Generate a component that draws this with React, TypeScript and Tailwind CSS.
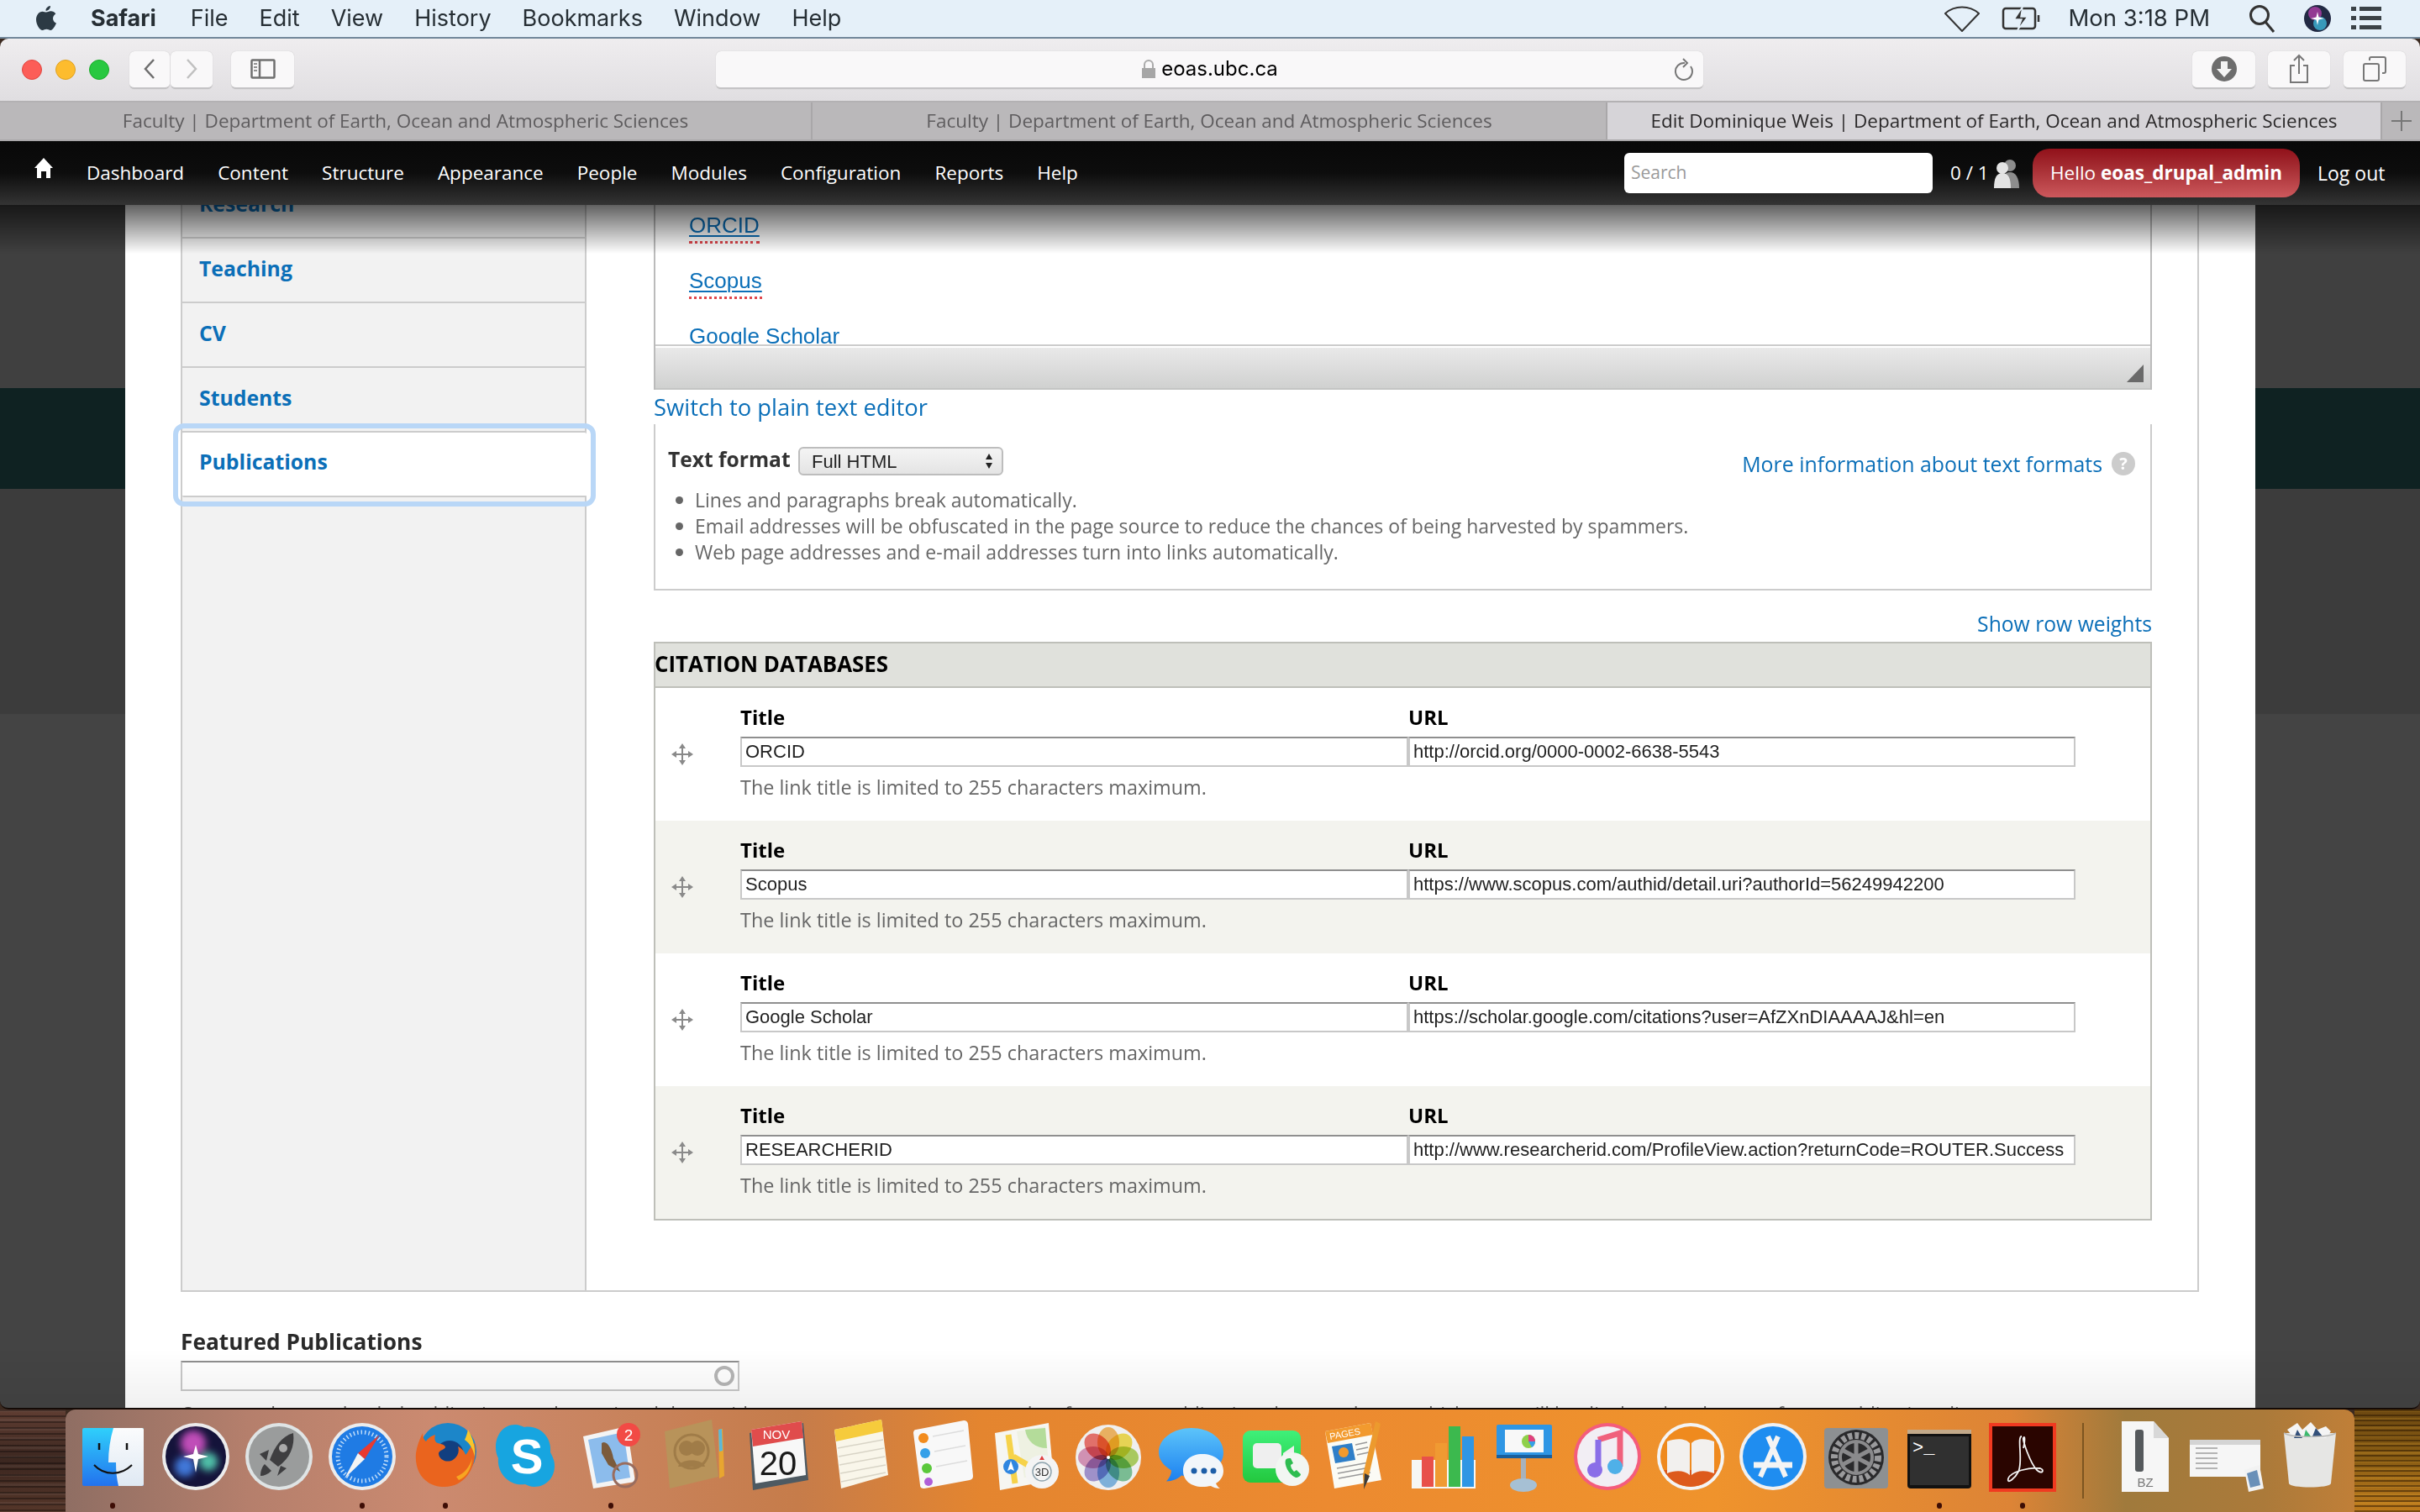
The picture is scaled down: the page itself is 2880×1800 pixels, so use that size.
import React from "react";

const menus = ["File", "Edit", "View", "History", "Bookmarks", "Window", "Help"];
const adminItems = ["Dashboard", "Content", "Structure", "Appearance", "People", "Modules", "Configuration", "Reports", "Help"];
const rows = [
  ["ORCID", "http://orcid.org/0000-0002-6638-5543"],
  ["Scopus", "https://www.scopus.com/authid/detail.uri?authorId=56249942200"],
  ["Google Scholar", "https://scholar.google.com/citations?user=AfZXnDIAAAAJ&hl=en"],
  ["RESEARCHERID", "http://www.researcherid.com/ProfileView.action?returnCode=ROUTER.Success"],
];

function Apple() {
  return (
    <svg width="26" height="32" viewBox="0 0 26 32" fill="#2c3a44">
      <path d="M18 1c.3 3-2.600 6-5.500 5.800C12.200 4 15 1.200 18 1zM13 8.500c1.500 0 3-1.300 5.500-1.300 2.200 0 4.500 1.100 5.800 3.200-4.800 2.900-4 9.300.7 11.200-1.200 3.100-4 8.400-6.800 8.400-1.800 0-2.700-1.200-4.800-1.200s-3.100 1.200-4.800 1.200C5 30 1 23 1 17.500c0-5.600 3.600-9.800 7.500-9.800 1.800 0 3.400.8 4.500.8z" />
    </svg>
  );
}

function MenuBar() {
  return (
    <div className="h-[46px] shrink-0 flex items-center bg-[#e5f0f9] border-b-2 border-[#71879a] text-[#262e34] text-[27px] font-['Inter',sans-serif] pl-[42px] pr-[46px]">
      <Apple />
      <span className="ml-[40px] font-bold mr-[41px]">Safari</span>
      <div className="flex gap-[37px]">
        {menus.map((m) => <span key={m}>{m}</span>)}
      </div>
      <div className="ml-auto flex items-center">
        <svg width="42" height="32" viewBox="0 0 42 32" fill="none" stroke="#333" strokeWidth="2"><path d="M1 10C12 0 30 0 41 10L21 31Z" /></svg>
        <svg className="ml-[26px]" width="46" height="30" viewBox="0 0 46 30" fill="none" stroke="#333" strokeWidth="2.500"><rect x="2" y="3" width="38" height="24" rx="3" /><path d="M44 11v8" /><path d="M25 1 15 16h9l-5 13 12-16h-8z" fill="#333" stroke="#e5f0f9" strokeWidth="1.500" /></svg>
        <span className="ml-[33px] text-[27.500px]">Mon 3:18 PM</span>
        <svg className="ml-[46px]" width="32" height="34" viewBox="0 0 32 34" fill="none" stroke="#333" strokeWidth="3"><circle cx="13" cy="13" r="10.500" /><path d="m20 21 10 12" /></svg>
        <svg className="ml-[34px]" width="32" height="32" viewBox="0 0 32 32"><circle cx="16" cy="16" r="16" fill="#222a44" /><circle cx="13" cy="10" r="8" fill="#b03fa8" opacity=".8" /><circle cx="19" cy="22" r="8" fill="#3fb5d8" opacity=".8" /><path d="M16 8l1.500 6.500 6.500 1.500-6.500 1.500-1.500 6.500-1.500-6.500-6.500-1.500 6.500-1.500z" fill="#fff" /></svg>
        <svg className="ml-[24px]" width="36" height="28" viewBox="0 0 36 28" fill="#3b4247"><rect x="0" y="0" width="6" height="5" /><rect x="10" y="0" width="26" height="5" /><rect x="0" y="11" width="6" height="5" /><rect x="10" y="11" width="26" height="5" /><rect x="0" y="22" width="6" height="5" /><rect x="10" y="22" width="26" height="5" /></svg>
      </div>
    </div>
  );
}

function ToolBtn({ className, children }: { className: string; children?: React.ReactNode }) {
  return (
    <div className={"h-[45px] rounded-[6px] bg-[#f9f8f9] border-b-2 border-[#c4c3c5] shadow-[0_0_1px_#bbb] flex items-center justify-center " + className}>
      {children}
    </div>
  );
}

function SafariBar() {
  return (
    <div className="h-[76px] shrink-0 flex items-center bg-[linear-gradient(180deg,#efedef,#e0dee1)] border-b-2 border-[#b3b1b3] rounded-t-[10px] font-['Inter',sans-serif]">
      <div className="ml-[26px] flex gap-[16px]">
        <span className="w-[24px] h-[24px] rounded-full bg-[#fc5d57] border border-[#e0443e]" />
        <span className="w-[24px] h-[24px] rounded-full bg-[#fdbc2e] border border-[#dea123]" />
        <span className="w-[24px] h-[24px] rounded-full bg-[#28c840] border border-[#1aab29]" />
      </div>
      <div className="ml-[24px] flex gap-[1px]">
        <ToolBtn className="w-[48px]">
          <svg width="16" height="26" viewBox="0 0 16 26" fill="none" stroke="#6e6e6e" strokeWidth="2.500"><path d="M13 2 3 13l10 11" /></svg>
        </ToolBtn>
        <ToolBtn className="w-[50px]">
          <svg width="16" height="26" viewBox="0 0 16 26" fill="none" stroke="#c0c0c0" strokeWidth="2.500"><path d="m3 2 10 11L3 24" /></svg>
        </ToolBtn>
      </div>
      <ToolBtn className="ml-[22px] w-[75px]">
        <svg width="30" height="24" viewBox="0 0 30 24" fill="none" stroke="#707070" strokeWidth="2.500"><rect x="1.500" y="1.500" width="27" height="21" rx="1" /><path d="M11 1v22" /><path d="M4 6h4M4 10h4M4 14h4" strokeWidth="1.500" /></svg>
      </ToolBtn>
      <ToolBtn className="ml-[502px] w-[1175px] relative">
        <span className="flex items-center gap-[6px] text-[24px] text-black">
          <svg width="18" height="22" viewBox="0 0 18 22"><path d="M4 10V6a5 5 0 0 1 10 0v4" fill="none" stroke="#aaa" strokeWidth="2" /><rect x="1" y="10" width="16" height="12" fill="#a6a6a6" /></svg>
          eoas.ubc.ca
        </span>
        <svg className="absolute right-[10px] top-[8px]" width="26" height="28" viewBox="0 0 26 28" fill="none" stroke="#777" strokeWidth="2"><path d="M21 10a10 10 0 1 1-7-4" /><path d="m12 1 5 5-5 5" /></svg>
      </ToolBtn>
      <ToolBtn className="ml-[582px] w-[75px]">
        <svg width="30" height="30" viewBox="0 0 30 30"><circle cx="15" cy="15" r="15" fill="#6d6d6d" /><path d="M11 6h8v9h5l-9 10-9-10h5z" fill="#f4f4f4" /></svg>
      </ToolBtn>
      <ToolBtn className="ml-[15px] w-[74px]">
        <svg width="26" height="36" viewBox="0 0 26 36" fill="none" stroke="#777" strokeWidth="2"><path d="M8 14H3v20h20V14h-5" /><path d="M13 24V2M7 8l6-6 6 6" /></svg>
      </ToolBtn>
      <ToolBtn className="ml-[16px] w-[74px]">
        <svg width="30" height="30" viewBox="0 0 30 30" fill="none" stroke="#777" strokeWidth="2"><rect x="2" y="9" width="18" height="20" rx="2" /><path d="M9 5V3a2 2 0 0 1 2-2h15a2 2 0 0 1 2 2v15a2 2 0 0 1-2 2h-2" /></svg>
      </ToolBtn>
    </div>
  );
}

const tabTitle = "Faculty | Department of Earth, Ocean and Atmospheric Sciences";

function Tabs() {
  return (
    <div className="h-[46px] shrink-0 flex bg-[#bab8ba] border-b-2 border-[#aaa8aa] text-[22.500px] font-['Open_Sans',sans-serif] text-[#5e5c5e]">
      <div className="w-[967px] flex items-center justify-center border-r-2 border-[#a9a7a9]">{tabTitle}</div>
      <div className="w-[944px] flex items-center justify-center">{tabTitle}</div>
      <div className="w-[922px] flex items-center justify-center bg-[#d6d4d8] text-[#2a2829] border-l-2 border-[#a9a7a9]">Edit Dominique Weis | Department of Earth, Ocean and Atmospheric Sciences</div>
      <div className="flex-1 flex items-center justify-center border-l-2 border-[#a9a7a9]">
        <svg width="26" height="26" viewBox="0 0 26 26" stroke="#777" strokeWidth="2"><path d="M13 1v24M1 13h24" /></svg>
      </div>
    </div>
  );
}

function AdminBar() {
  return (
    <div className="h-[76px] shrink-0 flex items-center bg-[linear-gradient(180deg,#080808_0,#0d0d0d_50%,#343434_100%)] text-white text-[22.500px] font-['Open_Sans',sans-serif] relative z-20">
      <svg className="ml-[40px] mb-[12px]" width="24" height="26" viewBox="0 0 24 26" fill="#fff"><path d="M12 1 23 13h-3v12h-5v-8H9v8H4V13H1z" /></svg>
      <div className="ml-[39px] flex gap-[40px]">
        {adminItems.map((a) => <span key={a} className="whitespace-nowrap">{a}</span>)}
      </div>
      <div className="ml-auto flex items-center pr-[38px]">
        <div className="w-[367px] h-[48px] rounded-[6px] bg-white text-[#9a9a9a] text-[21px] flex items-center pl-[8px]">Search</div>
        <div className="w-[119px] flex items-center pl-[21px]">
          <span>0 / 1</span>
          <svg className="ml-[5px]" width="32" height="36" viewBox="0 0 32 36"><circle cx="20" cy="9" r="7" fill="#8d8d8d" /><path d="M10 36c0-12 3-19 10-19s11 7 11 19z" fill="#8d8d8d" /><circle cx="11" cy="12" r="7" fill="#e4e4e4" /><path d="M1 36c0-12 3-18 10-18s10 6 10 18z" fill="#e4e4e4" /></svg>
        </div>
        <div className="h-[58px] w-[318px] rounded-[20px] bg-[linear-gradient(180deg,#91111a,#a32a30_35%,#cc585c)] flex items-center justify-center whitespace-nowrap">
          Hello&nbsp;<b>eoas_drupal_admin</b>
        </div>
        <span className="ml-[21px] w-[84px] text-[23px] whitespace-nowrap">Log out</span>
      </div>
    </div>
  );
}

function VerticalTabs() {
  return (
    <div className="w-[481px] shrink-0 bg-[#f2f2f2] border-r-2 border-[#ccc] text-[24.800px] font-bold text-[#0b6fb8]">
      {["Research", "Teaching", "CV", "Students"].map((t) => (
        <div key={t} className="h-[77px] border-b-2 border-[#ccc] pl-[20px] pt-[20px] leading-[30px]">{t}</div>
      ))}
      <div className="h-[77px] border-b-2 border-[#ccc] pl-[20px] pt-[19px] leading-[30px] bg-white -mr-[2px] relative outline-[6px] outline-[#b9d7f7] outline-offset-[5px] rounded-[2px]">Publications</div>
    </div>
  );
}

function Misspelt({ children, plain }: { children: React.ReactNode; plain?: boolean }) {
  return (
    <div className="h-[66px] flex items-center">
      <span className="relative text-[26px] text-[#0b6fb8] font-['Liberation_Sans',sans-serif] underline decoration-2 underline-offset-[3px]">
        {children}
        {!plain && <span className="absolute inset-x-0 bottom-[-2px] h-[3px] border-b-[3px] border-dotted border-[#e0474c]" />}
      </span>
    </div>
  );
}

function Editor() {
  return (
    <div className="border-x-2 border-[#bbb]">
      <div className="h-[203px] overflow-hidden pt-[28px] pl-[40px] bg-white">
        <Misspelt>ORCID</Misspelt>
        <Misspelt>Scopus</Misspelt>
        <Misspelt plain>Google Scholar</Misspelt>
      </div>
      <div className="h-[54px] border-t-2 border-[#ccc] border-b-2 border-b-[#c4c5c4] bg-[linear-gradient(180deg,#fff_0,#fff_2px,#e9e9e9_2px,#d0d1d0_100%)] flex items-end justify-end pr-[8px] pb-[7px]">
        <div className="w-[20px] h-[21px] bg-[#6a6a6a] [clip-path:polygon(100%_0,100%_100%,0_100%)]" />
      </div>
    </div>
  );
}

function FormatBox() {
  return (
    <div className="border-x-2 border-b-2 border-[#ccc] pl-[15px] pr-[18px] pt-[27px] pb-[28px]">
      <div className="flex items-start h-[34px]">
        <b className="w-[155px] text-[#333] text-[24.600px] leading-[30px] whitespace-nowrap">Text format</b>
        <div className="w-[244px] h-[34px] rounded-[6px] border-2 border-[#bdbdbd] bg-[linear-gradient(180deg,#f4f4f4,#e4e4e4)] flex items-center justify-between pl-[14px] pr-[10px] text-[22px] text-[#222] font-['Liberation_Sans',sans-serif]">
          Full HTML
          <svg width="10" height="20" viewBox="0 0 10 20" fill="#222"><path d="M5 1l4 7H1zM5 19l4-7H1z" /></svg>
        </div>
        <div className="ml-auto flex items-center gap-[11px] mt-[5px]">
          <span className="text-[#0b6fb8] text-[24.900px] leading-[30px]">More information about text formats</span>
          <span className="w-[28px] h-[28px] rounded-full bg-[#ccc] text-white text-[20px] font-bold flex items-center justify-center">?</span>
        </div>
      </div>
      <ul className="mt-[14px] text-[#666] text-[23px] leading-[31px] pl-[18px]">
        {[
          "Lines and paragraphs break automatically.",
          "Email addresses will be obfuscated in the page source to reduce the chances of being harvested by spammers.",
          "Web page addresses and e-mail addresses turn into links automatically.",
        ].map((t) => (
          <li key={t} className="flex items-center">
            <span className="w-[9px] h-[9px] rounded-full bg-[#666] mr-[14px] -ml-[9px]" />
            {t}
          </li>
        ))}
      </ul>
    </div>
  );
}

function Drag() {
  return (
    <svg width="26" height="26" viewBox="0 0 26 26" fill="#8a8a8a">
      <path d="M13 0l4 6h-3v6h6V9l6 4-6 4v-3h-6v6h3l-4 6-4-6h3v-6H6v3l-6-4 6-4v3h6V6H9z" />
    </svg>
  );
}

function Field({ value, w }: { value: string; w: string }) {
  return (
    <input
      readOnly
      value={value}
      className={"h-[36px] bg-white border-2 border-[#c8c8c8] border-t-[#8f8f8f] px-[4px] text-[22px] text-[#222] font-['Liberation_Sans',sans-serif] outline-none " + w}
    />
  );
}

function CitationTable() {
  return (
    <div className="border-2 border-[#bebfb9]">
      <div className="h-[53px] bg-[#e0e1dc] border-b-2 border-[#bebfb9] flex items-center pb-[3px] font-bold text-[25.900px] text-black"><span className="-ml-px">CITATION DATABASES</span></div>
      {rows.map(([title, url], i) => (
        <div key={title} className={"h-[158px] flex items-center pb-[6px] " + (i % 2 ? "bg-[#f3f3ee]" : "bg-white")}>
          <div className="w-[101px] shrink-0 pl-[19px] mt-[6px] flex"><Drag /></div>
          <div>
            <div className="flex font-bold text-[24px] leading-[28px] text-black">
              <span className="w-[795px]">Title</span>
              <span>URL</span>
            </div>
            <div className="flex mt-[9px]">
              <Field value={title} w="w-[795px]" />
              <Field value={url} w="w-[794px]" />
            </div>
            <div className="mt-[11px] text-[23.400px] leading-[26px] text-[#666]">The link title is limited to 255 characters maximum.</div>
          </div>
        </div>
      ))}
    </div>
  );
}

function Page() {
  return (
    <div className="flex-1 relative overflow-hidden rounded-b-[10px] border-b-2 border-[#140a06] bg-[linear-gradient(180deg,#404040_0,#404040_218px,#0f2222_218px,#0f2222_338px,#3c3c3c_338px,#3c3c3c_606px,#444_606px)]">
      <div className="ml-[149px] w-[2535px] h-full bg-white pl-[66px] overflow-hidden font-['Open_Sans',sans-serif]">
        <div className="-mt-[39px] w-[2402px] h-[1333px] border-2 border-[#ccc] flex">
          <VerticalTabs />
          <div className="pl-[80px] w-[1863px]">
            <Editor />
            <div className="h-[41px] flex items-center text-[27.400px] text-[#0b6fb8]">Switch to plain text editor</div>
            <FormatBox />
            <div className="h-[61px] flex items-end justify-end pb-[8px] text-[24.700px] leading-[26px] text-[#0b6fb8]">Show row weights</div>
            <CitationTable />
          </div>
        </div>
        <div className="mt-[44px] font-bold text-[26.300px] leading-[30px] text-[#2a2a2a]">Featured Publications</div>
        <div className="mt-[8px] w-[665px] h-[36px] border-2 border-[#c8c8c8] border-t-[#8f8f8f] flex items-center justify-end pr-[4px]">
          <span className="w-[24px] h-[24px] rounded-full border-[4px] border-[#b5b5b5]" />
        </div>
        <div className="mt-[10px] whitespace-nowrap text-[23px] text-[#666]">Once you have uploaded publications and associated them with your user account, you can select from your publications here to choose which ones will be displayed at the top of your publications list.</div>
      </div>
      <div className="absolute inset-x-0 top-0 h-[58px] bg-[linear-gradient(180deg,rgba(0,0,0,.62),rgba(0,0,0,0))] pointer-events-none" />
      <div className="absolute inset-x-0 bottom-0 h-[70px] bg-[linear-gradient(180deg,rgba(0,0,0,0),rgba(0,0,0,.06))] pointer-events-none" />
    </div>
  );
}

/* ---- dock icons, each on a 90x90 canvas ---- */
const I = ({ children }: { children: React.ReactNode }) => (
  <svg width="90" height="90" viewBox="0 0 90 90">{children}</svg>
);

const petals = ["#f7b04c", "#f5dd3c", "#a6d04a", "#6cc08c", "#6fb0e4", "#9a8ad0", "#d88ab4", "#ee5f58"];

const icons: Record<string, React.ReactNode> = {
  finder: (
    <I>
      <defs>
        <linearGradient id="fb" x1="0" y1="0" x2="0" y2="1"><stop offset="0" stopColor="#2fd0fb" /><stop offset="1" stopColor="#2372ee" /></linearGradient>
        <linearGradient id="fw" x1="0" y1="0" x2="0" y2="1"><stop offset="0" stopColor="#fbfcfd" /><stop offset="1" stopColor="#dfe9f3" /></linearGradient>
      </defs>
      <rect x="9" y="12" width="73" height="69" rx="2" fill="url(#fb)" />
      <path d="M46 12h34a2 2 0 0 1 2 2v65a2 2 0 0 1-2 2H52c-2-8-3-17-3-28H40c0-14 2-28 6-41z" fill="url(#fw)" />
      <path d="M29 30v8M62 30v8" stroke="#111" strokeWidth="2.500" />
      <path d="M23 56c12 13 32 13 45 0" stroke="#111" strokeWidth="2" fill="none" />
    </I>
  ),
  siri: (
    <I>
      <defs><filter id="sb"><feGaussianBlur stdDeviation="4" /></filter></defs>
      <circle cx="45" cy="46" r="40" fill="#ececec" />
      <circle cx="45" cy="46" r="36" fill="#14133a" />
      <g filter="url(#sb)">
        <circle cx="42" cy="30" r="15" fill="#c04db8" />
        <circle cx="60" cy="52" r="11" fill="#4fc0a8" />
        <circle cx="32" cy="58" r="12" fill="#3f77d8" />
      </g>
      <path d="M45 32l3 11 12 3-12 3-3 16-3-16-12-3 12-3z" fill="#fff" />
    </I>
  ),
  launchpad: (
    <I>
      <circle cx="45" cy="46" r="40" fill="#dfe4e5" />
      <circle cx="45" cy="46" r="36" fill="#9a9c9c" />
      <path d="M62 18c2 16-4 30-18 40l-10-8c6-16 14-28 28-32z" fill="#3e3e40" />
      <circle cx="50" cy="36" r="5" fill="#a9a9a9" />
      <path d="M33 38l-11 5 8 8zM47 57l-4 12 11-9zM28 55c-4 4-5 10-5 14 4 0 9-2 13-6z" fill="#3e3e40" />
    </I>
  ),
  safari: (
    <I>
      <circle cx="45" cy="46" r="40" fill="#ececec" />
      <circle cx="45" cy="46" r="36" fill="#1f7be4" />
      <circle cx="45" cy="46" r="29" fill="none" stroke="#bfdcf8" strokeWidth="5" strokeDasharray="1.500 3" />
      <path d="M66 20 48 49 40 42z" fill="#e83a30" />
      <path d="M24 72 40 42 48 49z" fill="#f4f4f4" />
    </I>
  ),
  firefox: (
    <I>
      <circle cx="48" cy="40" r="34" fill="#1c86c9" />
      <circle cx="50" cy="44" r="17" fill="#123f80" />
      <path d="M80 30c4 26-10 52-36 52C22 82 8 66 10 42c1-8 4-16 8-24 0 6 2 8 4 10 2-4 7-7 11-8-1 4-1 6 1 9 3 2 11 2 11 6-1 3-7 3-8 7 0 8 10 12 17 8 6-4 8-10 6-16 4 2 8 6 9 10 4-4 5-10 11-14z" fill="#ea641e" />
      <path d="M72 14c5 8 9 20 8 32-2-9-6-16-12-20 2-4 3-8 4-12z" fill="#f9c62b" />
      <path d="M58 70c10-4 16-12 19-22-1 12-6 22-16 26z" fill="#f7a521" />
    </I>
  ),
  skype: (
    <I>
      <path d="M30 8c5 0 8 2 11 3 18-3 33 12 31 30 2 4 5 9 5 16 0 14-10 25-24 25-5 0-8-2-11-3C24 82 8 66 10 48c-2-4-3-8-3-13C7 19 17 8 30 8z" fill="#17a5e0" />
      <text x="44" y="66" textAnchor="middle" fontSize="58" fontWeight="700" fill="#fff" fontFamily="'Liberation Sans',sans-serif">S</text>
    </I>
  ),
  mail: (
    <I>
      <path d="M12 22 64 10l10 66-50 8z" fill="#f4f4f4" />
      <path d="M18 26 60 17l8 54-40 7z" fill="#8cbcec" />
      <path d="M34 30c6-4 12 6 14 18l8 16-14-8-8-14z" fill="#7b5b3c" />
      <circle cx="62" cy="68" r="14" fill="none" stroke="#9a6d5e" strokeWidth="3" />
      <circle cx="66" cy="20" r="14" fill="#f24a45" />
      <text x="66" y="27" textAnchor="middle" fontSize="19" fill="#fff" fontFamily="'Liberation Sans',sans-serif">2</text>
    </I>
  ),
  contacts: (
    <I>
      <path d="M74 14l5-1 2 56-6 3z" fill="#e8a630" />
      <path d="M74 14l4-1 1 26-4 1z" fill="#5cb8d8" />
      <path d="M10 16 66 2l8 68-58 14z" fill="#b8935a" />
      <circle cx="42" cy="40" r="20" fill="none" stroke="#a07c48" strokeWidth="3" />
      <circle cx="36" cy="36" r="9" fill="#a07c48" />
      <circle cx="49" cy="36" r="9" fill="#a07c48" />
      <path d="M26 58c2-10 30-10 32 0z" fill="#a07c48" />
    </I>
  ),
  calendar: (
    <I>
      <path d="M12 18 76 6l6 68-66 12z" fill="#4e5a62" />
      <path d="M14 14 74 4l5 64-60 10z" fill="#f8f8f8" />
      <path d="M14 14 74 4l2 20-60 10z" fill="#e04c4c" />
      <text x="44" y="25" textAnchor="middle" fontSize="15" fill="#fff" fontFamily="'Liberation Sans',sans-serif">NOV</text>
      <text x="46" y="68" textAnchor="middle" fontSize="40" fill="#1a1a1a" fontFamily="'Liberation Sans',sans-serif">20</text>
    </I>
  ),
  notes: (
    <I>
      <path d="M14 14 70 2l8 66-56 16z" fill="#f9f6ea" />
      <path d="M14 14 70 2l2 14-56 12z" fill="#f6cb3c" />
      <path d="M18 36 72 26M19 46l54-10M20 56l54-10M21 66l54-10M22 76l53-11" stroke="#d8d4c6" strokeWidth="1.500" />
    </I>
  ),
  reminders: (
    <I>
      <path d="M13 14 70 3c3 0 4 1 5 4l6 62c0 3-1 4-4 5l-54 10c-3 0-5-1-5-4L10 18c0-2 1-4 3-4z" fill="#f8f8f8" />
      <circle cx="22" cy="24" r="6" fill="#f28c1e" />
      <circle cx="24" cy="42" r="6" fill="#35a0e8" />
      <circle cx="26" cy="60" r="6" fill="#5bc83c" />
      <circle cx="28" cy="76" r="5" fill="#b05fd8" />
      <path d="M33 22 70 15M35 40l37-7M37 58l37-7" stroke="#ddd" strokeWidth="1.500" />
    </I>
  ),
  maps: (
    <I>
      <path d="M8 18 72 6l6 68-64 12z" fill="#f6f6f2" />
      <path d="M34 16 68 10l5 56-30 5z" fill="#eef1e2" />
      <path d="M44 14c2 14 12 22 26 22l-2-24z" fill="#b4dc9a" />
      <path d="M24 20l8 58" stroke="#f6d24a" strokeWidth="7" />
      <path d="M30 46l24 14" stroke="#f6d24a" strokeWidth="7" />
      <circle cx="27" cy="58" r="9" fill="#2f86e0" />
      <path d="m27 51 4 12-4-2-4 2z" fill="#fff" />
      <circle cx="64" cy="64" r="20" fill="#f4f4f4" />
      <circle cx="64" cy="64" r="11" fill="none" stroke="#8fa4ae" strokeWidth="1.500" />
      <text x="64" y="69" textAnchor="middle" fontSize="13" fill="#333" fontFamily="'Liberation Sans',sans-serif">3D</text>
      <path d="m64 45 3 5h-6z" fill="#e04040" />
    </I>
  ),
  photos: (
    <I>
      <circle cx="44" cy="47" r="39" fill="#efefef" />
      <g>
        {petals.map((c, i) => (
          <ellipse key={c} cx="44" cy="29" rx="13" ry="18" fill={c} opacity=".85" className="mix-blend-multiply" transform={`rotate(${i * 45} 44 47)`} />
        ))}
      </g>
      <circle cx="44" cy="47" r="2" fill="#fff" />
    </I>
  ),
  messages: (
    <I>
      <defs><linearGradient id="mg" x1="0" y1="0" x2="0" y2="1"><stop offset="0" stopColor="#5cc4fa" /><stop offset="1" stopColor="#1c80f0" /></linearGradient></defs>
      <path d="M44 12c21 0 38 12 38 29 0 17-17 29-38 29-4 0-8-.5-12-1.500-4 4-11 7-18 7 4-4 6-9 6-13C11 57 5 50 5 41 5 24 23 12 44 12z" fill="url(#mg)" />
      <path d="M57 43c14 0 25 8 25 20 0 7-4 12-9 15 1 2 3 5 5 6-4 0-8-1-11-3-3 .5-6 1-10 1-14 0-23-8-23-19 0-12 9-20 23-20z" fill="#f2f6fa" />
      <circle cx="47" cy="63" r="3.500" fill="#1d5ea8" /><circle cx="59" cy="63" r="3.500" fill="#1d5ea8" /><circle cx="70" cy="63" r="3.500" fill="#1d5ea8" />
    </I>
  ),
  facetime: (
    <I>
      <defs><linearGradient id="ft" x1="0" y1="0" x2="0" y2="1"><stop offset="0" stopColor="#3ff07a" /><stop offset="1" stopColor="#23c83e" /></linearGradient></defs>
      <rect x="6" y="15" width="69" height="62" rx="9" fill="url(#ft)" />
      <rect x="18" y="30" width="34" height="30" rx="5" fill="#efefef" />
      <path d="m54 42 13-9v24l-13-9z" fill="#efefef" />
      <circle cx="65" cy="61" r="20" fill="#f2f6f2" />
      <path d="M57 50c-2 5 3 17 12 21 3 0 6-2 6-4l-5-5-3 2c-2-2-4-5-4-8l3-2-3-6c-2 0-5 0-6 2z" fill="#2ebd50" />
    </I>
  ),
  pages: (
    <I>
      <path d="M6 16 60 6l13 68-56 10z" fill="#fbfbf5" />
      <path d="M6 16 60 6l3 14-54 10z" fill="#f29a2e" />
      <text x="12" y="26" fontSize="11" fill="#fff" fontFamily="'Liberation Sans',sans-serif" transform="rotate(-10 12 26)">PAGES</text>
      <path d="M14 34 38 30l4 20-24 4z" fill="#2f7fc8" />
      <circle cx="28" cy="41" r="6" fill="#f29a2e" />
      <path d="M42 32 56 29M43 38l14-3M44 44l14-3M20 60l38-7M21 66l38-7M22 72l38-7" stroke="#999" strokeWidth="1.500" />
      <path d="M66 4l6 3-14 62-6 16-1-17z" fill="#ec9a2e" />
      <path d="M53 66l6 3-7 16z" fill="#3a3a3a" />
    </I>
  ),
  numbers: (
    <I>
      <path d="M10 50h76v34H10z" fill="#f6f6f4" />
      <rect x="22" y="46" width="14" height="36" fill="#e8504a" />
      <rect x="38" y="30" width="14" height="52" fill="#f09a32" />
      <rect x="54" y="10" width="14" height="72" fill="#3cb94e" />
      <rect x="70" y="22" width="14" height="60" fill="#2f96e4" />
    </I>
  ),
  keynote: (
    <I>
      <rect x="41" y="40" width="6" height="40" fill="#a8b2ba" />
      <ellipse cx="44" cy="80" rx="16" ry="8" fill="#a6c0d4" />
      <rect x="12" y="8" width="66" height="40" rx="2" fill="#2f96e4" />
      <rect x="12" y="44" width="66" height="4" fill="#1a5f9c" />
      <rect x="22" y="14" width="46" height="27" fill="#f8f8f8" />
      <circle cx="50" cy="28" r="8" fill="#8fd04a" />
      <path d="M50 28V20a8 8 0 0 1 8 8z" fill="#e04080" />
      <path d="M50 28h8a8 8 0 0 1-4 7z" fill="#35a0e8" />
    </I>
  ),
  music: (
    <I>
      <circle cx="45" cy="46" r="40" fill="#f45c7c" />
      <circle cx="45" cy="46" r="36" fill="#f2eef4" />
      <path d="M34 26 60 18v40" stroke="#f0607c" strokeWidth="7" fill="none" />
      <circle cx="30" cy="62" r="9" fill="#8a6ee8" />
      <circle cx="54" cy="58" r="9" fill="#4fb0e8" />
      <path d="M34 26v36" stroke="#8a6ee8" strokeWidth="7" />
    </I>
  ),
  books: (
    <I>
      <circle cx="45" cy="46" r="40" fill="#f4f4f4" />
      <circle cx="45" cy="46" r="36" fill="#ef8a1e" />
      <path d="M45 82a36 36 0 0 1-32-20h64a36 36 0 0 1-32 20z" fill="#dd5a1c" />
      <path d="M17 28c10-4 22-4 27 2v38c-6-6-18-6-27-2zM73 28c-10-4-22-4-27 2v38c6-6 18-6 27-2z" fill="#f2f0ee" />
    </I>
  ),
  appstore: (
    <I>
      <circle cx="45" cy="46" r="40" fill="#f0f0f0" />
      <circle cx="45" cy="46" r="36" fill="#1f8df0" />
      <path d="M51 22 30 70M39 22l21 48" stroke="#f4f4f4" strokeWidth="6" />
      <path d="M22 56h46" stroke="#f4f4f4" strokeWidth="7" />
    </I>
  ),
  prefs: (
    <I>
      <rect x="7" y="12" width="76" height="72" rx="4" fill="#8d9092" />
      <circle cx="45" cy="47" r="33" fill="#2a2a2c" />
      <circle cx="45" cy="47" r="26" fill="none" stroke="#9a9a9c" strokeWidth="8" strokeDasharray="5 3" />
      <circle cx="45" cy="47" r="19" fill="none" stroke="#8a8a8c" strokeWidth="4" />
      <path d="M45 28v38M28 38l34 18M28 56l34-18" stroke="#8a8a8c" strokeWidth="5" />
    </I>
  ),
  terminal: (
    <I>
      <rect x="7" y="14" width="76" height="70" rx="4" fill="#111" />
      <rect x="7" y="14" width="76" height="5" fill="#c2a98a" />
      <rect x="10" y="22" width="70" height="58" fill="#303030" />
      <text x="13" y="42" fontSize="22" fill="#fff" fontFamily="'Liberation Mono',monospace">&gt;_</text>
    </I>
  ),
  acrobat: (
    <I>
      <rect x="5" y="6" width="80" height="82" fill="#f03a20" />
      <rect x="9" y="10" width="72" height="74" fill="#2a0500" />
      <path d="M44 22c-6 0 2 30-4 42-4 8-14 16-12 8 3-8 26-14 38-12 6 2 2 8-4 2-8-8-18-38-16-38 2-4 2 4 0 12" fill="none" stroke="#f4f4f4" strokeWidth="1.800" />
    </I>
  ),
  zip: (
    <I>
      <path d="M18 4h38l18 20v64H18z" fill="#f6f6f6" />
      <path d="M56 4v20h18z" fill="#d8d8d8" />
      <rect x="34" y="14" width="10" height="50" rx="3" fill="#55595c" />
      <text x="46" y="82" textAnchor="middle" fontSize="15" fill="#777" fontFamily="'Liberation Sans',sans-serif">BZ</text>
    </I>
  ),
  window: (
    <I>
      <rect x="1" y="26" width="84" height="44" fill="#f6f6f6" />
      <rect x="1" y="26" width="84" height="6" fill="#d4d4d4" />
      <path d="M8 36h26M8 42h26M8 48h26M8 54h26M8 60h26" stroke="#b4b4b4" strokeWidth="2" />
      <path d="M66 62l18-6 5 28-18 4z" fill="#f2f2f2" />
      <path d="M69 66l12-4 4 18-12 3z" fill="#6a90b8" />
    </I>
  ),
  trash: (
    <I>
      <path d="M14 18h62l-6 60c-1 6-49 6-50 0z" fill="#e6e6e4" />
      <path d="M18 14l12-8 6 8 10-9 8 9 10-4 6 6-6 8H26z" fill="#f4f4f4" />
      <path d="M30 14l6 10h-10zM52 12l8 10h-12z" fill="#33507a" />
      <path d="M40 14l6 8h-8z" fill="#3cb96e" />
      <path d="M14 18c10 6 52 6 62 0" stroke="#bcbcba" strokeWidth="1.500" fill="none" />
    </I>
  ),
};

const dockA: [string, boolean][] = [
  ["finder", true], ["siri", false], ["launchpad", false], ["safari", true], ["firefox", true], ["skype", false],
  ["mail", true], ["contacts", false], ["calendar", false], ["notes", false], ["reminders", false], ["maps", false],
  ["photos", false], ["messages", false], ["facetime", false], ["pages", false], ["numbers", false], ["keynote", false],
  ["music", false], ["books", false], ["appstore", false], ["prefs", false], ["terminal", true], ["acrobat", true],
];
const dockB: [string, boolean][] = [["zip", false], ["window", false], ["trash", false]];

function Slot({ name, on }: { name: string; on: boolean }) {
  return (
    <div className="w-[98.800px] shrink-0 flex flex-col items-center pt-[10px]">
      <div className="h-[90px]">{icons[name]}</div>
      <span className={"mt-[11px] w-[6px] h-[7px] rounded-full " + (on ? "bg-[#3d0d05]" : "bg-transparent")} />
    </div>
  );
}

function Dock() {
  return (
    <div className="h-[122px] shrink-0 flex justify-between">
      <div className="w-[78px] bg-[repeating-linear-gradient(180deg,rgba(0,0,0,.32)_0,rgba(0,0,0,.32)_2px,transparent_2px,transparent_7px),repeating-linear-gradient(180deg,rgba(255,255,255,.05)_0,rgba(255,255,255,.05)_3px,transparent_3px,transparent_11px),linear-gradient(180deg,#5f3d32,#3c2720_50%,#553629)]" />
      <div className="flex-1 h-full flex pl-[7px] rounded-t-[12px] bg-[linear-gradient(90deg,#8f6e63_0,#b57f6c_8%,#cb8a70_16%,#c67c4a_32%,#e4852f_40%,#ec8a30_55%,#ef932c_72%,#dd8436_85%,#a07a3c_90%,#ab7a3a_96%,#c07f38_100%)]">
        {dockA.map(([n, on]) => <Slot key={n} name={n} on={on} />)}
        <div className="w-[46px] flex items-start justify-center pt-[16px]"><span className="w-[2px] h-[90px] bg-[#7d5520]" /></div>
        {dockB.map(([n, on]) => <Slot key={n} name={n} on={on} />)}
      </div>
      <div className="w-[78px] bg-[repeating-linear-gradient(180deg,rgba(40,20,0,.5)_0,rgba(40,20,0,.5)_2px,transparent_2px,transparent_6px),repeating-linear-gradient(180deg,rgba(255,190,60,.14)_0,rgba(255,190,60,.14)_3px,transparent_3px,transparent_10px),linear-gradient(180deg,#6b4710,#8c5f14_50%,#bd7a1c)]" />
    </div>
  );
}

export default function App() {
  return (
    <div className="w-[2880px] h-[1800px] flex flex-col overflow-hidden bg-[#3c2a20]">
      <MenuBar />
      <div className="flex-1 min-h-0 flex flex-col">
        <SafariBar />
        <Tabs />
        <AdminBar />
        <Page />
      </div>
      <Dock />
    </div>
  );
}
